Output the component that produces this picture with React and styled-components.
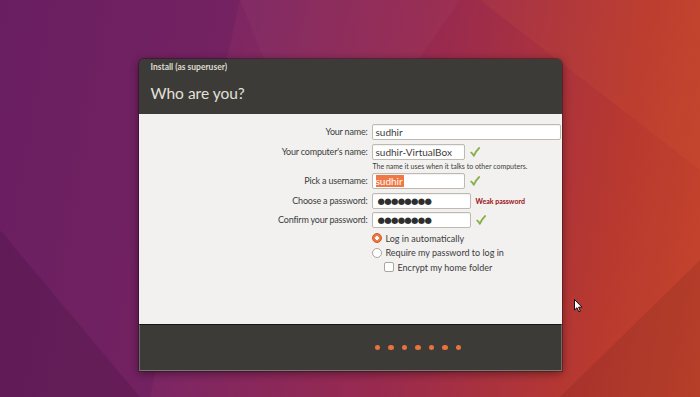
import styled, { createGlobalStyle } from 'styled-components';

const GlobalStyle = createGlobalStyle`
  html, body {
    margin: 0;
    padding: 0;
    overflow: hidden;
  }
  body {
    font-family: Lato, 'Noto Sans', 'DejaVu Sans', sans-serif;
  }
`;

//! Desktop with the wallpaper behind the installer window
const Desktop = styled.div`
  position: relative;
  width: 700px;
  height: 397px;
  display: flex;
  justify-content: center;
  align-items: flex-start;
  padding-top: 59px;
  box-sizing: border-box;
  background: linear-gradient(100deg, #6e2166 0%, #7d2664 30%, #992a4f 58%, #b9392f 85%, #c5452c 100%);
  overflow: hidden;
`;

const Wallpaper = styled.svg`
  position: absolute;
  inset: 0;
  width: 700px;
  height: 397px;
`;

const Cursor = styled.svg`
  position: absolute;
  left: 574px;
  top: 299px;
  width: 9px;
  height: 14px;
`;

//! Installer window
const Window = styled.div`
  position: relative;
  width: 423px;
  height: 312px;
  display: flex;
  flex-direction: column;
  border-radius: 5px 5px 0 0;
  overflow: hidden;
  box-shadow: 0 2px 10px rgba(0, 0, 0, 0.45), 0 0 0 1px rgba(0, 0, 0, 0.25);
`;

const Header = styled.div`
  height: 55px;
  background: #3c3b37;
  display: flex;
  flex-direction: column;
  padding: 2px 12px 0;
  box-sizing: border-box;
  color: #dfdbd2;
`;

const WindowTitle = styled.div`
  font-size: 8.5px;
  font-weight: bold;
  line-height: 12px;
  height: 16px;
`;

const PageTitle = styled.h1`
  margin: 7px 0 0;
  font-size: 15.5px;
  font-weight: normal;
  line-height: 18px;
  color: #e4e1d9;
`;

const Content = styled.div`
  flex: 1;
  background: #f2f1f0;
  padding: 10px 1px 0 0;
`;

const Form = styled.div`
  display: grid;
  grid-template-columns: 229px 1fr;
  column-gap: 4px;
  row-gap: 3.5px;
  align-items: start;
`;

const Label = styled.div`
  text-align: right;
  font-size: 9px;
  letter-spacing: -0.2px;
  line-height: 16px;
  color: #3c3c3c;
  white-space: nowrap;
`;

const Field = styled.div`
  display: flex;
  flex-direction: column;
`;

const FieldRow = styled.div`
  display: flex;
  align-items: center;
`;

const Input = styled.div`
  width: ${(p) => p.width || '100%'};
  height: 16px;
  box-sizing: border-box;
  border: 1px solid #bdbab4;
  border-radius: 2px;
  background: #fff;
  box-shadow: inset 0 1px 1px rgba(0, 0, 0, 0.06);
  padding: 0 3px;
  font-size: 10px;
  line-height: 14px;
  color: #3c3c3c;
  display: flex;
  align-items: center;
`;

const Selected = styled.span`
  background: #f07746;
  color: #fff;
  line-height: 12px;
  padding: 0 1px 0 0;
`;

const Dots = styled.span`
  font-family: 'DejaVu Sans', sans-serif;
  font-size: 8.5px;
  letter-spacing: -0.7px;
  color: #2e2e2e;
  padding-left: 2px;
`;

const Hint = styled.div`
  font-size: 7px;
  line-height: 8px;
  margin: 2px 0 0 1px;
  color: #3c3c3c;
`;

const Warning = styled.span`
  font-size: 7px;
  font-weight: bold;
  color: #9a1010;
  margin-left: 5px;
`;

const CheckMark = styled.svg`
  width: 10px;
  height: 10px;
  margin-left: 5px;
`;

const Options = styled.div`
  grid-column: 2;
  display: flex;
  flex-direction: column;
  gap: 3.5px;
  margin-top: 1px;
`;

const Option = styled.label`
  display: flex;
  align-items: center;
  gap: 4px;
  height: 11px;
  padding-left: ${(p) => (p.indent ? '12px' : '0')};
  font-size: 9px;
  color: #3c3c3c;
`;

const Radio = styled.span`
  width: 10px;
  height: 10px;
  box-sizing: border-box;
  border-radius: 50%;
  border: 1px solid ${(p) => (p.checked ? '#d6501f' : '#a9a69f')};
  background: ${(p) =>
    p.checked ? 'radial-gradient(circle, #fff 0 1.6px, #ee7a45 2.1px)' : '#fff'};
`;

const Checkbox = styled.span`
  width: 10px;
  height: 10px;
  box-sizing: border-box;
  border-radius: 2px;
  border: 1px solid #a9a69f;
  background: #fff;
`;

//! Footer with the slideshow progress dots
const Footer = styled.div`
  height: 47px;
  box-sizing: border-box;
  background: #3c3b37;
  border-top: 1px solid #151514;
  border-left: 1px solid #6c6b66;
  border-right: 1px solid #6c6b66;
  border-bottom: 1px solid #7a7974;
  display: flex;
  align-items: center;
  padding-left: 235px;
  gap: 8px;
`;

const Dot = styled.span`
  width: 5.5px;
  height: 5px;
  border-radius: 50%;
  background: #e8733f;
`;

const Check = () => (
  <CheckMark viewBox='0 0 10 10'>
    <path
      d='M1.2 5.6 C2.4 6.4 3.2 7.6 3.8 8.8 C5 5.8 6.8 3.2 9.2 1'
      fill='none'
      stroke='#89b04a'
      strokeWidth='1.8'
      strokeLinecap='round'
      strokeLinejoin='round'
    />
  </CheckMark>
);

const App = () => (
  <>
    <GlobalStyle />
    <Desktop>
      <Wallpaper viewBox='0 0 700 397' preserveAspectRatio='none'>
        <polygon points='0,0 240,0 150,397 0,397' fill='#5c1a58' opacity='0.28' />
        <polygon points='240,0 460,0 320,200' fill='#ffffff' opacity='0.025' />
        <polygon points='0,230 140,397 0,397' fill='#000' opacity='0.1' />
        <polygon points='480,0 700,0 700,170' fill='#ff8a3c' opacity='0.07' />
        <polygon points='560,397 700,260 700,397' fill='#000' opacity='0.08' />
      </Wallpaper>
      <Window>
        <Header>
          <WindowTitle>Install (as superuser)</WindowTitle>
          <PageTitle>Who are you?</PageTitle>
        </Header>
        <Content>
          <Form>
            <Label>Your name:</Label>
            <Field>
              <Input>sudhir</Input>
            </Field>

            <Label>Your computer's name:</Label>
            <Field>
              <FieldRow>
                <Input width='93px'>sudhir-VirtualBox</Input>
                <Check />
              </FieldRow>
              <Hint>The name it uses when it talks to other computers.</Hint>
            </Field>

            <Label>Pick a username:</Label>
            <Field>
              <FieldRow>
                <Input width='93px'>
                  <Selected>sudhir</Selected>
                </Input>
                <Check />
              </FieldRow>
            </Field>

            <Label>Choose a password:</Label>
            <Field>
              <FieldRow>
                <Input width='99px'>
                  <Dots>●●●●●●●●</Dots>
                </Input>
                <Warning>Weak password</Warning>
              </FieldRow>
            </Field>

            <Label>Confirm your password:</Label>
            <Field>
              <FieldRow>
                <Input width='99px'>
                  <Dots>●●●●●●●●</Dots>
                </Input>
                <Check />
              </FieldRow>
            </Field>

            <Options>
              <Option>
                <Radio checked />
                Log in automatically
              </Option>
              <Option>
                <Radio />
                Require my password to log in
              </Option>
              <Option indent>
                <Checkbox />
                Encrypt my home folder
              </Option>
            </Options>
          </Form>
        </Content>
        <Footer>
          {[0, 1, 2, 3, 4, 5, 6].map((i) => (
            <Dot key={i} />
          ))}
        </Footer>
      </Window>
      <Cursor viewBox='0 0 9 14'>
        <path
          d='M0.5 0.5 L0.5 11 L3 8.7 L4.8 12.8 L6.3 12.1 L4.6 8.2 L8 8.2 Z'
          fill='#fff'
          stroke='#000'
          strokeWidth='0.9'
          strokeLinejoin='round'
        />
      </Cursor>
    </Desktop>
  </>
);

export default App;
